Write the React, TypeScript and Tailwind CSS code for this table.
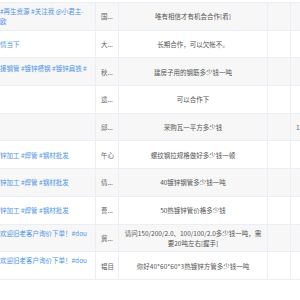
const rows = [
  { tag: ["#再生资源 #关注我 @小君主-", "欧"], name: "国...", msg: ["唯有相信才有机会合作[看]"], extra: "", up: "" },
  { tag: ["情当下"], name: "大...", msg: ["长期合作，可以欠帐不。"], extra: "", up: "" },
  { tag: ["援钢管 #镀锌槽钢 #镀锌扁铁 #"], name: "秋...", msg: ["建房子用的钢筋多少钱一吨"], extra: "", up: "pb-2" },
  { tag: [], name: "遗...", msg: ["可以合作下"], extra: "", up: "" },
  { tag: [], name: "邱...", msg: ["采购瓦一平方多少钱"], extra: "1", up: "" },
  { tag: ["锌加工 #焊管 #钢材批发"], name: "午心", msg: ["螺纹钢拉规格做好多少钱一顿"], extra: "", up: "" },
  { tag: ["锌加工 #焊管 #钢材批发"], name: "倩...", msg: ["40镀锌钢管多少钱一吨"], extra: "", up: "" },
  { tag: ["锌加工 #焊管 #钢材批发"], name: "曹...", msg: ["50热镀锌管价格多少钱"], extra: "", up: "" },
  { tag: ["欢迎旧老客户询价下单！#dou"], name: "冀...", msg: ["请问150/200/2.0、100/100/2.0多少钱一吨，需", "要20吨左右[握手]"], extra: "", up: "pb-[10px]" },
  { tag: ["欢迎旧老客户询价下单！#dou"], name: "韫目", msg: ["你好40*60*60*3热镀锌方管多少钱一吨"], extra: "", up: "pb-3" },
];

export default function App() {
  return (
    <div
      className="w-[300px] h-[300px] overflow-hidden bg-white text-[6.5px] leading-[10px]"
      style={{ fontFamily: '"Noto Sans CJK SC", "Noto Sans", sans-serif' }}
    >
      <div className="h-[3px] border-b border-[#ebeef5]" />
      {rows.map((r, i) => (
        <div
          key={i}
          className={`grid grid-cols-[96px_23px_149px_23px_1fr] h-[27.7px] border-b border-[#ebeef5] ${
            i % 2 === 0 ? "bg-[#f7f7f7]" : "bg-white"
          }`}
        >
          <div className={`flex flex-col justify-center overflow-hidden whitespace-nowrap pr-1 text-[#4f95e2] border-r border-[#ebeef5] ${r.up}`}>
            {r.tag.map((t, j) => (
              <span key={j}>{t}</span>
            ))}
          </div>
          <div className="flex items-center pl-[5px] text-[#606266] border-r border-[#ebeef5] whitespace-nowrap overflow-hidden">
            {r.name}
          </div>
          <div className="flex flex-col items-center justify-center px-1 text-center text-[#555] border-r border-[#ebeef5] whitespace-nowrap">
            {r.msg.map((m, j) => (
              <span key={j}>{m}</span>
            ))}
          </div>
          <div className="border-r border-[#ebeef5]" />
          <div className="flex items-center pl-[5px] text-[#606266]">{r.extra}</div>
        </div>
      ))}
    </div>
  );
}
